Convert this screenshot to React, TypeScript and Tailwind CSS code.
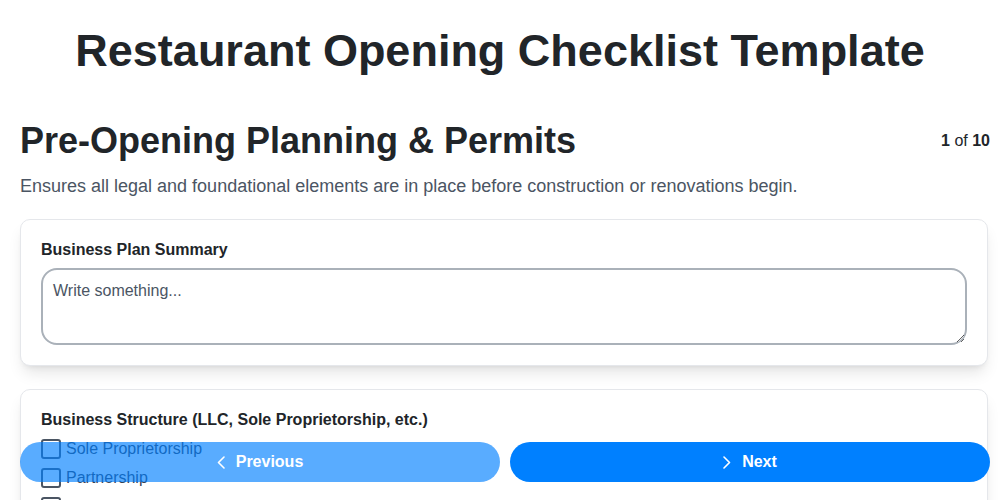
const options = ["Sole Proprietorship", "Partnership", "Limited Liability Company (LLC)", "Corporation"];

function Chevron({ dir }: { dir: "left" | "right" }) {
  return (
    <svg width="8" height="13" viewBox="0 0 8 13" fill="none" stroke="currentColor" strokeWidth="1.6" strokeLinecap="round" strokeLinejoin="round">
      {dir === "left" ? <polyline points="7,1 1.5,6.5 7,12" /> : <polyline points="1,1 6.5,6.5 1,12" />}
    </svg>
  );
}

export default function App() {
  return (
    <div className="h-screen overflow-hidden bg-white text-[#212529] font-['Liberation_Sans',Arial,sans-serif]">
      <h1 className="px-5 pt-6 text-center text-[45px] font-bold leading-[1.2]">
        Restaurant Opening Checklist Template
      </h1>

      <div className="pl-5 pr-[10px]">
        <div className="mt-[43px] flex items-center justify-between">
          <h2 className="text-4xl font-bold leading-10">Pre-Opening Planning &amp; Permits</h2>
          <div className="text-base leading-6">
            <span className="font-bold">1</span> of <span className="font-bold">10</span>
          </div>
        </div>
        <p className="mt-[11px] text-lg leading-7 text-[#4b5563]">
          Ensures all legal and foundational elements are in place before construction or renovations begin.
        </p>

        {/* Text question */}
        <div className="mr-[2px] mt-[19px] rounded-[10px] border border-[#e5e7eb] bg-white p-5 shadow-lg">
          <label className="block text-base font-bold leading-5">Business Plan Summary</label>
          <textarea
            placeholder="Write something..."
            className="mt-2 block h-[77px] w-full rounded-2xl border-2 border-[#aab1b9] px-[10px] py-[9px] text-base leading-6 outline-none placeholder:text-[#4b5563]"
          />
        </div>

        {/* Choice question */}
        <div className="mr-[2px] mt-[23px] rounded-[10px] border border-[#e5e7eb] bg-white p-5 shadow-lg">
          <label className="block text-base font-bold leading-5">
            Business Structure (LLC, Sole Proprietorship, etc.)
          </label>
          <div className="mt-[9px] flex flex-col gap-[9px]">
            {options.map((o) => (
              <label key={o} className="flex h-5 items-center gap-[5px] text-base text-[#374151]">
                <span className="h-5 w-5 shrink-0 rounded-[3px] border-2 border-[#4b5563] bg-white" />
                {o}
              </label>
            ))}
          </div>
        </div>
      </div>

      {/* Navigation */}
      <div className="fixed inset-x-0 bottom-[18px] flex gap-[10px] pl-5 pr-[10px]">
        <button className="flex h-10 flex-1 items-center justify-center gap-[11px] rounded-full bg-[#0080ff] text-base font-bold text-white opacity-[0.65]">
          <Chevron dir="left" />
          Previous
        </button>
        <button className="flex h-10 flex-1 items-center justify-center gap-[11px] rounded-full bg-[#0080ff] text-base font-bold text-white">
          <Chevron dir="right" />
          Next
        </button>
      </div>
    </div>
  );
}
